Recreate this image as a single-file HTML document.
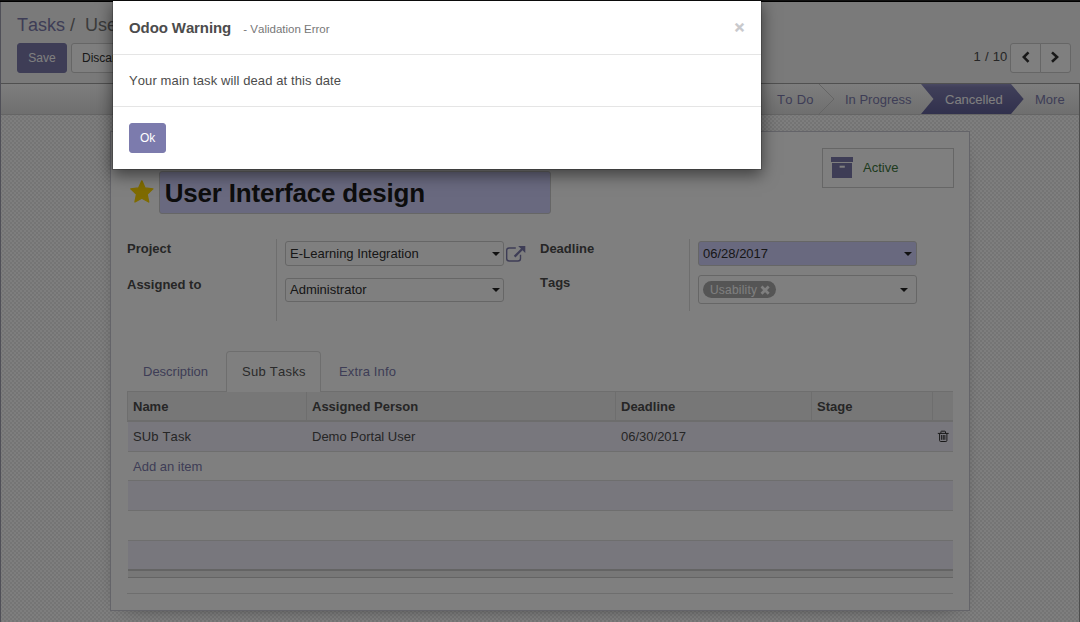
<!DOCTYPE html>
<html>
<head>
<meta charset="utf-8">
<title>Odoo</title>
<style>
*{box-sizing:border-box;}
html,body{margin:0;padding:0;}
body{font-kerning:none;width:1080px;height:622px;overflow:hidden;position:relative;background:#fff;font-family:"Liberation Sans",Arial,sans-serif;font-size:13px;color:#4c4c4c;line-height:1.42857;}
.abs{position:absolute;}
a{color:#7c7bad;text-decoration:none;}
#page{position:absolute;left:0;top:0;width:1080px;height:622px;overflow:hidden;}
#navstrip{left:0;top:0;width:1080px;height:2px;background:#000;border-top:1px solid #222;}
#leftedge{left:0;top:1px;width:1px;height:621px;background:#a0a0b0;}
#cp{left:1px;top:1px;width:1079px;height:83px;background:#f4f4f4;border-bottom:1px solid #a0a0a0;}
.bc{font-kerning:none;left:16px;top:11px;font-size:18px;line-height:26px;white-space:nowrap;color:#777;}
.bc a{color:#7c7bad;}
.btn{position:absolute;font-size:12px;line-height:18px;padding:5px 10px;border:1px solid transparent;border-radius:3px;white-space:nowrap;text-align:center;}
.btn-primary{background:#7c7bad;border-color:#7c7bad;color:#fff;}
.btn-default{background:#fff;border-color:#ccc;color:#333;}
#statusbar{left:1px;top:84px;width:1078px;height:31px;border-bottom:1px solid #cacaca;background:linear-gradient(#fcfcfc,#dedede);}
#content{left:1px;top:115px;}
#sheet{left:110px;top:131px;width:860px;height:480px;background:#fff;border:1px solid #c8c8d3;box-shadow:0 5px 20px -15px #000;}
.lbl{font-weight:bold;color:#4c4c4c;white-space:nowrap;}
.field{border:1px solid #ccc;border-radius:3px;background:#fff;height:25px;padding:1px 4px 0;line-height:22px;white-space:nowrap;color:#2e2e2e;}
.req{background:#d2d2ff;}
.caret{position:absolute;width:0;height:0;border-left:4px solid transparent;border-right:4px solid transparent;border-top:4px solid #222;}
#overlay{left:0;top:0;width:1080px;height:622px;background:rgba(0,0,0,.5);}
#modal{left:112px;top:0;width:650px;height:170px;background:#fff;background-clip:padding-box;box-shadow:0 5px 15px rgba(0,0,0,.5);border:1px solid rgba(0,0,0,.2);}
</style>
</head>
<body>
<div id="page">
  <div id="cp" class="abs">
    <div class="abs bc"><a>Tasks</a> /&nbsp; User Interface design</div>
    <div class="btn btn-primary" style="left:16px;top:42px;width:50px;">Save</div>
    <div class="btn btn-default" style="left:70px;top:42px;width:62px;">Discard</div>
    <div class="abs" style="left:972.5px;top:47px;font-size:13px;color:#4c4c4c;white-space:nowrap;word-spacing:0.6px;">1 / 10</div>
    <div class="btn btn-default" style="left:1009px;top:42px;width:31px;height:30px;border-radius:3px 0 0 3px;"></div>
    <div class="btn btn-default" style="left:1039px;top:42px;width:31px;height:30px;border-radius:0 3px 3px 0;"></div>
    <svg class="abs" style="left:1009px;top:42px;" width="61" height="30" viewBox="0 0 61 30"><path d="M18.5 9.4 L13.84 14.1 L18.5 18.8" fill="none" stroke="#333" stroke-width="2.6"/><path d="M42 9.4 L47.06 14.1 L42 18.8" fill="none" stroke="#333" stroke-width="2.6"/></svg>
  </div>
  <div id="statusbar" class="abs">
    <svg class="abs" style="left:760px;top:0;" width="318" height="30" viewBox="0 0 318 30">
      <defs><linearGradient id="sg" x1="0" y1="0" x2="0" y2="1"><stop offset="0" stop-color="#9291c4"/><stop offset="0.12" stop-color="#7f7eb2"/><stop offset="1" stop-color="#62619a"/></linearGradient></defs>
      <path d="M58 0 L73 15 L58 30" fill="none" stroke="#cbcbcb" stroke-width="1"/>
      <path d="M160 0 L250 0 L262.7 15 L250 30 L160 30 L172.5 15 Z" fill="url(#sg)"/>
      <text x="16" y="19.5" font-family="Liberation Sans" font-size="13" fill="#7c7bad" letter-spacing="0.3">To Do</text>
      <text x="84" y="19.5" font-family="Liberation Sans" font-size="13" fill="#7c7bad">In Progress</text>
      <text x="184" y="19.5" font-family="Liberation Sans" font-size="13" fill="#ffffff">Cancelled</text>
      <text x="274" y="19.5" font-family="Liberation Sans" font-size="13" fill="#7c7bad">More</text>
    </svg>
  </div>
  <svg id="content" class="abs" width="1079" height="507" shape-rendering="crispEdges"><defs><pattern id="chk" x="3" y="1" width="4" height="4" patternUnits="userSpaceOnUse"><rect width="4" height="4" fill="#fdfdfd"/><rect x="0" y="0" width="2" height="2" fill="#eaeaea"/><rect x="2" y="2" width="2" height="2" fill="#eaeaea"/></pattern></defs><rect width="1079" height="507" fill="url(#chk)"/></svg>
  <div id="leftedge" class="abs"></div>
  <div class="abs" style="left:1079px;top:84px;width:1px;height:538px;background:#9c9c9c;"></div>
  <div id="navstrip" class="abs"></div>
  <div id="sheet" class="abs"></div>

  <!-- Active button -->
  <div class="abs" style="left:822px;top:148px;width:132px;height:40px;border:1px solid #ccc;background:#fff;"></div>
  <svg class="abs" style="left:831px;top:157px;" width="22" height="22" viewBox="0 0 22 22"><rect x="0" y="0" width="22" height="5" fill="#7c7bad"/><rect x="1" y="6" width="20" height="15" fill="#7c7bad"/><rect x="8.6" y="8.7" width="5.2" height="2" fill="#fff"/></svg>
  <div class="abs" style="left:863px;top:159px;color:#3c763d;font-size:13px;">Active</div>

  <!-- star + title -->
  <svg class="abs" style="left:129px;top:180px;" width="26" height="24" viewBox="-0.9 0 26 24"><path d="M12.5 0.9 L15.9 8.2 L24.1 9.2 L18.1 14.8 L19.7 22.8 L12.5 18.9 L5.3 22.8 L6.9 14.8 L0.9 9.2 L9.1 8.2 Z" fill="#ffd700" stroke="#ffd700" stroke-width="1.4" stroke-linejoin="round" transform="scale(0.955 0.965)"/></svg>
  <div class="abs field req" style="left:159px;top:171px;width:392px;height:43px;font-size:26px;font-weight:bold;line-height:41px;padding:1px 4px 0 4.7px;letter-spacing:-0.2px;color:#1a1a1a;">User Interface design</div>

  <!-- group left -->
  <div class="abs lbl" style="left:127px;top:240px;">Project</div>
  <div class="abs lbl" style="left:127px;top:276px;">Assigned to</div>
  <div class="abs" style="left:276px;top:239px;width:1px;height:82px;background:#ddd;"></div>
  <div class="abs field" style="left:285px;top:241px;width:219px;">E-Learning Integration</div>
  <div class="caret" style="left:492px;top:252px;"></div>
  <div class="abs field" style="left:285px;top:278px;width:219px;height:24px;padding-top:0;">Administrator</div>
  <div class="caret" style="left:492px;top:288px;"></div>
  <svg class="abs" style="left:506px;top:244px;" width="20" height="19" viewBox="0 0 20 19"><path d="M14.5 10.8 V14.5 a2.5 2.5 0 0 1 -2.5 2.5 H3.2 a2.5 2.5 0 0 1 -2.5 -2.5 V6.5 a2.5 2.5 0 0 1 2.5 -2.5 H9.8" fill="none" stroke="#7c7bad" stroke-width="1.4"/><path d="M12.2 1.9 H19.3 V9 Z" fill="#7c7bad"/><path d="M17 4.2 L8.6 12.6" stroke="#7c7bad" stroke-width="2.3" fill="none"/></svg>

  <!-- group right -->
  <div class="abs lbl" style="left:540px;top:240px;">Deadline</div>
  <div class="abs lbl" style="left:540px;top:274px;">Tags</div>
  <div class="abs" style="left:689px;top:239px;width:1px;height:72px;background:#ddd;"></div>
  <div class="abs field req" style="left:698px;top:241px;width:219px;">06/28/2017</div>
  <div class="caret" style="left:904px;top:252px;"></div>
  <div class="abs field" style="left:698px;top:275px;width:219px;height:29px;"></div>
  <div class="abs" style="left:703px;top:281px;width:73px;height:17px;border-radius:8.5px;background:#aaa;color:#fff;font-size:12px;line-height:18px;padding-left:7px;white-space:nowrap;letter-spacing:0.2px;">Usability</div>
  <svg class="abs" style="left:760px;top:285px;" width="10" height="10" viewBox="0 0 10 10"><path d="M1.5 1.5 L8.7 8.7 M8.7 1.5 L1.5 8.7" stroke="#fff" stroke-width="2.7" fill="none"/></svg>
  <div class="caret" style="left:900px;top:288px;"></div>

  <!-- tabs -->
  <div class="abs" style="left:127px;top:391px;width:826px;height:1px;background:#ddd;"></div>
  <div class="abs" style="left:143px;top:363px;"><a>Description</a></div>
  <div class="abs" style="left:226px;top:351px;width:95px;height:41px;border:1px solid #ddd;border-bottom:0;border-radius:4px 4px 0 0;background:#fff;"></div>
  <div class="abs" style="left:242px;top:363px;color:#555;letter-spacing:0.25px;">Sub Tasks</div>
  <div class="abs" style="left:339px;top:363px;letter-spacing:0.15px;"><a>Extra Info</a></div>

  <!-- table -->
  <div class="abs" style="left:127px;top:392px;width:826px;height:30px;background:#eeeeee;border-left:1px solid #ddd;border-bottom:2px solid #dadada;"></div>
  <div class="abs" style="left:306px;top:392px;width:1px;height:28px;background:#ddd;"></div>
  <div class="abs" style="left:615px;top:392px;width:1px;height:28px;background:#ddd;"></div>
  <div class="abs" style="left:811px;top:392px;width:1px;height:28px;background:#ddd;"></div>
  <div class="abs" style="left:932px;top:392px;width:1px;height:28px;background:#ddd;"></div>
  <div class="abs lbl" style="left:133px;top:398px;">Name</div>
  <div class="abs lbl" style="left:312px;top:398px;">Assigned Person</div>
  <div class="abs lbl" style="left:621px;top:398px;">Deadline</div>
  <div class="abs lbl" style="left:817px;top:398px;">Stage</div>

  <div class="abs" style="left:128px;top:422px;width:825px;height:30px;background:#f1eefb;border-bottom:1px solid #ddd;"></div>
  <div class="abs" style="left:133px;top:428px;letter-spacing:0.14px;">SUb Task</div>
  <div class="abs" style="left:312px;top:428px;">Demo Portal User</div>
  <div class="abs" style="left:621px;top:428px;">06/30/2017</div>
  <svg class="abs" style="left:937px;top:430px;" width="13" height="14" viewBox="0 0 13 14"><path d="M0.8 3.4 H11.7 M3.9 3.3 V1.8 a0.6 0.6 0 0 1 .6 -.6 H7.9 a.6 .6 0 0 1 .6 .6 V3.3 M2.6 3.3 V10.5 a1 1 0 0 0 1 1 H8.9 a1 1 0 0 0 1 -1 V3.3 M4.65 5 V9.8 M6.25 5 V9.8 M7.85 5 V9.8" fill="none" stroke="#333" stroke-width="1"/></svg>
  <div class="abs" style="left:133px;top:458px;"><a>Add an item</a></div>
  <div class="abs" style="left:128px;top:480px;width:825px;height:31px;background:#f1eefb;border-top:1px solid #ddd;border-bottom:1px solid #ddd;"></div>
  <div class="abs" style="left:128px;top:540px;width:825px;height:31px;background:#f1eefb;border-top:1px solid #ddd;border-bottom:2px solid #c8c8c8;"></div>
  <div class="abs" style="left:128px;top:571px;width:825px;height:6px;background:#eee;"></div>
  <div class="abs" style="left:128px;top:577px;width:825px;height:1px;background:#c8c8c8;"></div>
  <div class="abs" style="left:127px;top:593px;width:826px;height:1px;background:#ddd;"></div>

  <div id="overlay" class="abs"></div>

  <div id="modal" class="abs">
    <div class="abs" style="left:16px;top:15px;font-size:15px;font-weight:bold;color:#4c4c4c;line-height:24px;white-space:nowrap;"><span style="letter-spacing:-0.1px;">Odoo Warning</span> <span style="font-size:11.5px;font-weight:normal;color:#777;margin-left:8px;">- Validation Error</span></div>
    <div class="abs" style="left:621.5px;top:17px;font-size:17px;font-weight:bold;color:#c8c8cc;-webkit-text-stroke:0.45px #c8c8cc;line-height:20px;">&times;</div>
    <div class="abs" style="left:0;top:53px;width:648px;height:1px;background:#e5e5e5;"></div>
    <div class="abs" style="left:16px;top:71px;color:#4c4c4c;white-space:nowrap;letter-spacing:0.11px;">Your main task will dead at this date</div>
    <div class="abs" style="left:0;top:105px;width:648px;height:1px;background:#e5e5e5;"></div>
    <div class="btn btn-primary" style="left:16px;top:122px;width:37px;height:30px;">Ok</div>
  </div>
</div>
</body>
</html>
